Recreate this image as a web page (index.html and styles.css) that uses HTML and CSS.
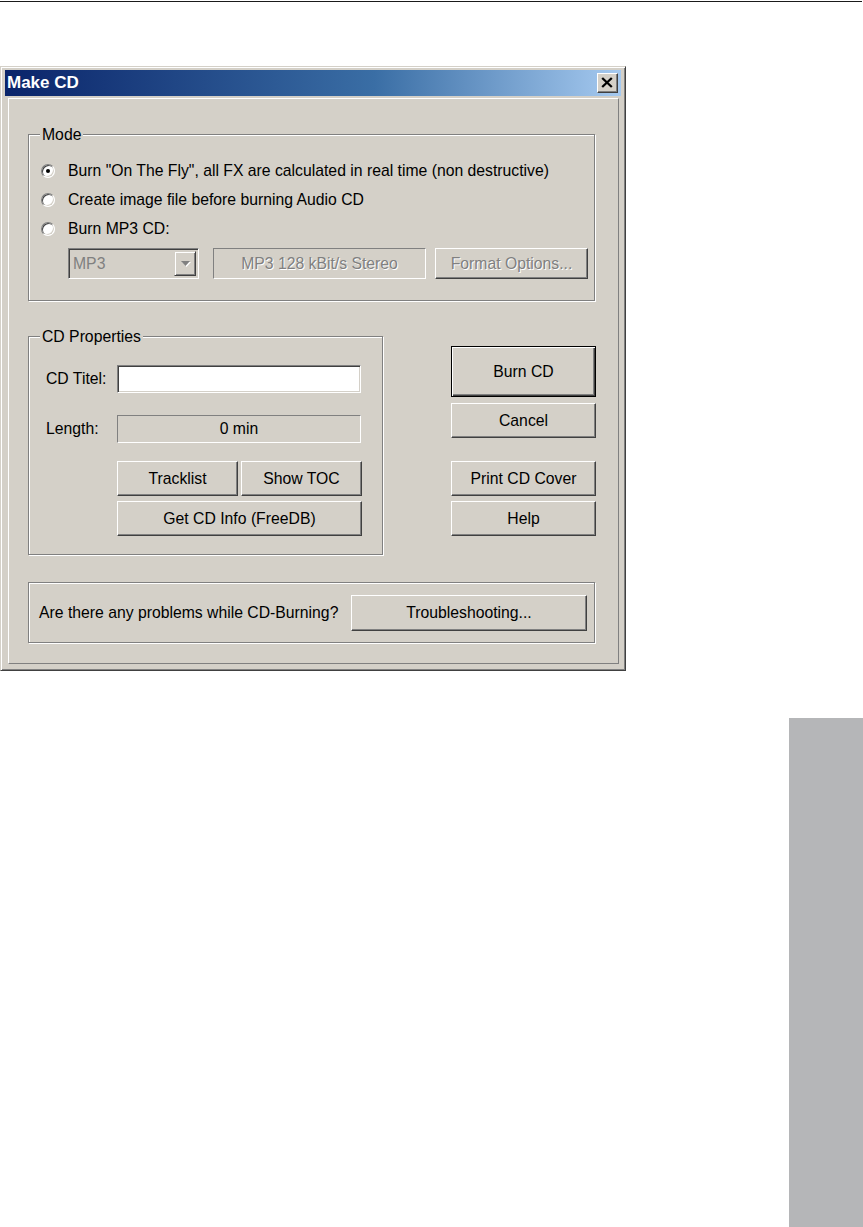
FILE: index.html
```html
<!DOCTYPE html>
<html>
<head>
<meta charset="utf-8">
<title>Make CD</title>
<link rel="stylesheet" href="styles.css">
</head>
<body>
<div class="page">
  <div class="rule"></div>
  <div class="window">
    <div class="titlebar">
      <span class="title">Make CD</span>
      <span class="close"><svg width="12" height="11" viewBox="0 0 12 11"><path d="M1.2 1 L10.8 10 M10.8 1 L1.2 10" stroke="#000" stroke-width="2.3" fill="none"/></svg></span>
    </div>
    <div class="client">
      <div class="group mode">
        <span class="group-label">Mode</span>
        <div class="radio-row"><span class="radio checked"></span><span>Burn "On The Fly", all FX are calculated in real time (non destructive)</span></div>
        <div class="radio-row"><span class="radio"></span><span>Create image file before burning Audio CD</span></div>
        <div class="radio-row"><span class="radio"></span><span>Burn MP3 CD:</span></div>
        <div class="mp3-row">
          <div class="combo">
            <span class="combo-text">MP3</span>
            <span class="combo-btn"><svg width="9" height="6" viewBox="0 0 9 6"><path d="M0 0 H9 L4.5 5 Z" fill="#808080"/></svg></span>
          </div>
          <div class="static mp3-static disabled">MP3 128 kBit/s Stereo</div>
          <div class="btn fmt disabled">Format Options...</div>
        </div>
      </div>

      <div class="middle">
        <div class="group props">
          <span class="group-label">CD Properties</span>
          <div class="field-row">
            <span class="field-label">CD Titel:</span>
            <div class="edit"></div>
          </div>
          <div class="field-row len-row">
            <span class="field-label">Length:</span>
            <div class="static len">0 min</div>
          </div>
          <div class="btn-grid">
            <div class="btn">Tracklist</div>
            <div class="btn">Show TOC</div>
            <div class="btn span2">Get CD Info (FreeDB)</div>
          </div>
        </div>
        <div class="actions">
          <div class="btn default">Burn CD</div>
          <div class="btn cancel">Cancel</div>
          <div class="btn print">Print CD Cover</div>
          <div class="btn help">Help</div>
        </div>
      </div>

      <div class="group trouble">
        <span>Are there any problems while CD-Burning?</span>
        <div class="btn trouble-btn">Troubleshooting...</div>
      </div>
    </div>
  </div>
  <div class="tab"></div>
</div>
</body>
</html>
```

FILE: styles.css
```css
* { box-sizing: border-box; }

body {
  margin: 0;
  background: #fff;
  font-family: "Liberation Sans", Arial, sans-serif;
}

.page {
  height: 1227px;
  display: flex;
  flex-direction: column;
}

.rule {
  margin-top: 1px;
  width: 862px;
  height: 1px;
  background: #1a1a1a;
}

.window {
  margin-top: 64px;
  width: 626px;
  height: 605px;
  background: #d4d0c8;
  border: 1px solid;
  border-color: #d4d0c8 #404040 #404040 #d4d0c8;
  box-shadow: inset 1px 1px #fff, inset -1px -1px #808080;
  padding: 3px 4px 4px 4px;
  display: flex;
  flex-direction: column;
  font-size: 15.75px;
  color: #000;
}

.titlebar {
  height: 26px;
  flex: none;
  display: flex;
  align-items: center;
  justify-content: space-between;
  padding: 0 3px 0 2px;
  background: linear-gradient(to right, #0a246a, #3a6ea5 60%, #a6caf0);
}

.title {
  color: #fff;
  font-weight: bold;
  font-size: 17px;
}

.close {
  width: 21px;
  height: 20px;
  background: #d4d0c8;
  border: 1px solid;
  border-color: #fff #404040 #404040 #fff;
  box-shadow: inset -1px -1px #808080;
  display: flex;
  align-items: center;
  justify-content: center;
  padding: 0 1px 1px 0;
}

.close svg { display: block; }

.client {
  flex: 1;
  margin: 2px 2px 2px 3px;
  border: 1px solid;
  border-color: #fff #808080 #808080 #fff;
  padding: 35px 0 0 19px;
  display: flex;
  flex-direction: column;
}

.group {
  position: relative;
  border: 1px solid #808080;
  box-shadow: inset 1px 1px #fff, 1px 1px #fff;
}

.group-label {
  position: absolute;
  top: -9px;
  left: 11px;
  padding: 0 2px;
  line-height: 17px;
  background: #d4d0c8;
}

.mode {
  width: 567px;
  padding: 21px 0 21px 12px;
}

.radio-row {
  height: 29px;
  display: flex;
  align-items: center;
  gap: 13px;
}

.radio {
  width: 14px;
  height: 14px;
  flex: none;
  border-radius: 50%;
  border: 1px solid;
  border-color: #808080 #fff #fff #808080;
  background: #fff;
  box-shadow: inset 1px 1px #404040, inset -1px -1px #d4d0c8;
  position: relative;
}

.radio.checked::after {
  content: "";
  position: absolute;
  left: 4px;
  top: 4px;
  width: 4px;
  height: 4px;
  border-radius: 50%;
  background: #000;
}

.mp3-row {
  margin: 5px 0 0 27px;
  display: flex;
  align-items: flex-start;
}

.combo {
  width: 131px;
  height: 31px;
  border: 1px solid;
  border-color: #808080 #fff #fff #808080;
  box-shadow: inset 1px 1px #404040, inset -1px -1px #d4d0c8;
  background: #d4d0c8;
  padding: 2px;
  display: flex;
  align-items: stretch;
}

.combo-text {
  flex: 1;
  color: #808080;
  padding-left: 2px;
  display: flex;
  align-items: center;
}

.combo-btn {
  width: 22px;
  background: #d4d0c8;
  border: 1px solid;
  border-color: #d4d0c8 #404040 #404040 #d4d0c8;
  box-shadow: inset 1px 1px #fff, inset -1px -1px #808080;
  display: flex;
  align-items: center;
  justify-content: center;
}

.combo-btn svg { display: block; filter: drop-shadow(1px 1px 0 #fff); }

.static {
  border: 1px solid;
  border-color: #808080 #fff #fff #808080;
  display: flex;
  align-items: center;
  justify-content: center;
}

.mp3-static {
  margin-left: 14px;
  width: 213px;
  height: 31px;
}

.disabled {
  color: #808080;
  text-shadow: 1px 1px 0 #fff;
}

.btn {
  background: #d4d0c8;
  border: 1px solid;
  border-color: #fff #404040 #404040 #fff;
  box-shadow: inset -1px -1px #808080;
  display: flex;
  align-items: center;
  justify-content: center;
  white-space: nowrap;
}

.fmt {
  margin-left: 9px;
  width: 153px;
  height: 31px;
}

.middle {
  margin-top: 35px;
  display: flex;
  align-items: flex-start;
}

.props {
  width: 355px;
  padding: 28px 0 18px 17px;
}

.field-row {
  display: flex;
  align-items: center;
  height: 28px;
}

.len-row { margin-top: 22px; }

.field-label { width: 71px; flex: none; }

.edit {
  width: 244px;
  height: 28px;
  background: #fff;
  border: 1px solid;
  border-color: #808080 #fff #fff #808080;
  box-shadow: inset 1px 1px #404040, inset -1px -1px #d4d0c8;
}

.len {
  width: 244px;
  height: 28px;
}

.btn-grid {
  margin: 18px 0 0 71px;
  display: grid;
  grid-template-columns: 121px 121px;
  grid-auto-rows: 35px;
  gap: 5px 3px;
}

.span2 { grid-column: 1 / 3; }

.actions {
  margin-left: 68px;
  padding-top: 10px;
  width: 145px;
  display: flex;
  flex-direction: column;
}

.actions .btn { height: 35px; }

.actions .default {
  height: 51px;
  border: 1px solid #000;
  box-shadow: inset 1px 1px #fff, inset -1px -1px #404040, inset -2px -2px #808080;
}

.actions .cancel { margin-top: 6px; }
.actions .print { margin-top: 23px; }
.actions .help { margin-top: 5px; }

.trouble {
  margin-top: 27px;
  width: 567px;
  height: 61px;
  padding: 0 7px 0 10px;
  display: flex;
  align-items: center;
}

.trouble-btn {
  margin-left: auto;
  width: 236px;
  height: 36px;
}

.tab {
  margin-top: auto;
  align-self: flex-end;
  width: 74px;
  height: 509px;
  background: #b5b6b8;
}
```
